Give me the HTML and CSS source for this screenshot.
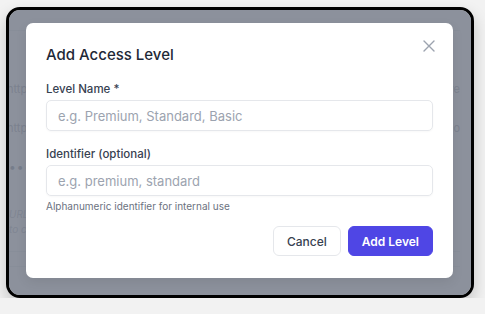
FILE: index.html
```html
<!DOCTYPE html>
<html lang="en">
<head>
    <meta charset="UTF-8">
    <meta name="viewport" content="width=device-width, initial-scale=1.0">
    <title>Add Access Level</title>
    <link rel="stylesheet" href="styles.css">
</head>
<body>
    <div class="frame">
        <!-- page behind the dialog -->
        <div class="app">
            <div class="app-head"></div>
            <div class="app-row"><span class="url">https:</span><span class="meta">Live</span></div>
            <div class="app-row"><span class="url">https:</span><span class="meta">Demo</span></div>
            <div class="app-row"><span class="dots">•••</span></div>
            <div class="app-note">
                <div>URL. In</div>
                <div>to co</div>
            </div>
            <div class="app-line"></div>
            <div class="app-line"></div>
        </div>

        <div class="overlay">
            <div class="modal">
                <h2 class="modal-title">Add Access Level</h2>
                <button class="close" aria-label="Close">
                    <svg width="12" height="12" viewBox="0 0 12 12" fill="none" stroke="currentColor" stroke-width="1.4" stroke-linecap="round">
                        <path d="M1 1L11 11M11 1L1 11"/>
                    </svg>
                </button>

                <div class="field">
                    <label for="levelName">Level Name *</label>
                    <input class="input" type="text" id="levelName" placeholder="e.g. Premium, Standard, Basic">
                </div>

                <div class="field">
                    <label for="identifier">Identifier (optional)</label>
                    <input class="input" type="text" id="identifier" placeholder="e.g. premium, standard">
                    <div class="hint">Alphanumeric identifier for internal use</div>
                </div>

                <div class="actions">
                    <button class="btn btn-cancel">Cancel</button>
                    <button class="btn btn-primary">Add Level</button>
                </div>
            </div>
        </div>
    </div>
</body>
</html>
```

FILE: styles.css
```css
body {
    margin: 0;
    background-color: #f2f2f2;
    font-family: Inter, "Noto Sans", sans-serif;
}
.frame {
    position: relative;
    width: 462px;
    height: 285px;
    margin: 7px 0 0 6px;
    border: 3px solid #000;
    border-radius: 14px;
    overflow: hidden;
    background: #fff;
    box-shadow: 0 7px 16px rgba(0, 0, 0, 0.2);
}

/* background app */
.app {
    padding: 0 11px 0 0;
    color: #b4b9c1;
    font-size: 11px;
}
.app-head {
    height: 20px;
    border-bottom: 1px solid #eef0f2;
    margin-bottom: 38px;
}
.app-row {
    display: flex;
    justify-content: space-between;
    align-items: center;
    height: 39px;
}
.url {
    margin-left: -2px;
}
.dots {
    letter-spacing: 1px;
    color: #9ca3af;
    font-size: 12px;
}
.app-note {
    margin-top: 21px;
    font-style: italic;
    line-height: 15px;
    font-size: 10px;
    color: #c6cad1;
}
.app-line {
    height: 14px;
    border-bottom: 1px solid #eef0f2;
}

/* dialog */
.overlay {
    position: absolute;
    inset: 0;
    display: flex;
    flex-direction: column;
    padding: 13px 18px 17px 17px;
    background: rgba(107, 114, 128, 0.78);
}
.modal {
    position: relative;
    flex: 1;
    background: #fff;
    border-radius: 7px;
    padding: 22px 20px 21px;
    box-shadow: 0 4px 12px rgba(0, 0, 0, 0.08);
}
.modal-title {
    margin: 0 0 16px;
    font-size: 15px;
    font-weight: 500;
    line-height: 20px;
    color: #1f2937;
}
.close {
    position: absolute;
    top: 17px;
    right: 18px;
    padding: 0;
    border: 0;
    background: none;
    color: #9ca3af;
    display: flex;
}
.field + .field {
    margin-top: 15px;
}
.field label {
    display: block;
    font-size: 11.5px;
    font-weight: 500;
    line-height: 16px;
    color: #374151;
    margin-bottom: 3px;
}
.input {
    display: block;
    width: 100%;
    height: 31px;
    box-sizing: border-box;
    padding: 0 11px;
    border: 1px solid #e5e7eb;
    border-radius: 5px;
    font-family: inherit;
    font-size: 13px;
    color: #111827;
    box-shadow: 0 1px 2px rgba(0, 0, 0, 0.03);
}
.input::placeholder {
    color: #9ca3af;
}
.hint {
    margin-top: 3px;
    font-size: 10px;
    line-height: 14px;
    color: #6b7280;
}
.actions {
    display: flex;
    justify-content: flex-end;
    gap: 7px;
    margin-top: 13px;
}
.btn {
    height: 30px;
    padding: 0 13px;
    border-radius: 6px;
    font-family: inherit;
    font-size: 12px;
    font-weight: 500;
}
.btn-cancel {
    background: #fff;
    border: 1px solid #e5e7eb;
    color: #374151;
}
.btn-primary {
    background: #4f46e5;
    border: 1px solid #4f46e5;
    color: #fff;
    font-weight: 600;
}
```
